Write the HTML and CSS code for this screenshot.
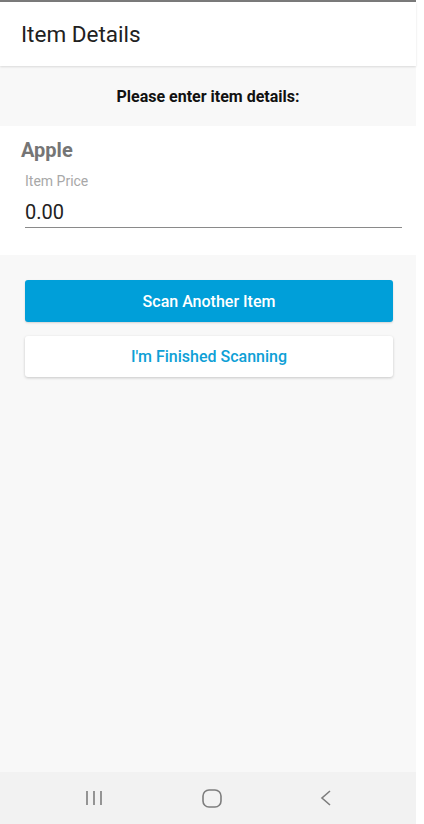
FILE: index.html
```html
<!DOCTYPE html>
<html lang="en">
<head>
    <meta charset="UTF-8">
    <title>Item Details</title>
    <link rel="stylesheet" href="styles.css">
</head>
<body>
    <div class="screen">
        <div class="status"></div>
        <div class="header">
            <h1>Item Details</h1>
        </div>
        <div class="intro">Please enter item details:</div>
        <div class="form">
            <div class="item-name">Apple</div>
            <label class="field-label" for="price">Item Price</label>
            <input class="field" id="price" type="text" value="0.00">
        </div>
        <div class="actions">
            <button class="btn btn-primary">Scan Another Item</button>
            <button class="btn btn-secondary">I'm Finished Scanning</button>
        </div>
        <div class="navbar">
            <svg class="nav-icon" width="18" height="16" viewBox="0 0 18 16">
                <path d="M2 1v14M9 1v14M16 1v14" stroke="#7d7d7d" stroke-width="1.6" fill="none"/>
            </svg>
            <svg class="nav-icon" width="20" height="19" viewBox="0 0 20 19">
                <rect x="1" y="1" width="18" height="17" rx="6" stroke="#7d7d7d" stroke-width="1.6" fill="none"/>
            </svg>
            <svg class="nav-icon" width="12" height="16" viewBox="0 0 12 16">
                <path d="M10 1L2 8l8 7" stroke="#7d7d7d" stroke-width="1.6" fill="none"/>
            </svg>
        </div>
    </div>
</body>
</html>
```

FILE: styles.css
```css
html { background: #fff; }
body { margin: 0; font-family: Roboto, "Liberation Sans", sans-serif; }
.screen { width: 416px; height: 824px; display: flex; flex-direction: column; background: #f8f8f8; }
.status { height: 2px; background: #7a7a7a; }
.header { height: 64px; background: #fff; display: flex; align-items: center; padding: 0 21px; box-shadow: 0 1px 2px rgba(0,0,0,0.12); position: relative; z-index: 1; }
.header h1 { margin: 0; font-size: 22.5px; font-weight: 400; color: #212121; }
.intro { height: 60px; display: flex; align-items: center; justify-content: center; font-size: 16px; font-weight: 700; color: #111; padding-top: 1px; box-sizing: border-box; }
.form { height: 129px; background: #fff; padding: 0 14px 0 21px; box-sizing: border-box; display: flex; flex-direction: column; }
.item-name { font-size: 20px; font-weight: 700; color: #757575; margin-top: 12px; }
.field-label { font-size: 14px; color: #a8a8a8; margin: 11px 0 0 4px; }
.field { margin: 11px 0 0 4px; border: none; border-bottom: 1px solid #8a8a8a; padding: 0 0 3px; height: 28px; box-sizing: border-box; line-height: 24px; font-family: inherit; font-size: 20px; color: #222; background: transparent; outline: none; }
.actions { flex: 1; padding: 25px 23px 0 25px; display: flex; flex-direction: column; gap: 14px; }
.btn { height: 42px; border-radius: 3px; font-family: inherit; font-size: 16px; font-weight: 500; border: none; }
.btn-primary { background: #009fd9; color: #fff; box-shadow: 0 1px 2px rgba(0,0,0,0.15); }
.btn-secondary { background: #fff; color: #0ea0d6; height: 41px; box-shadow: 0 1px 3px rgba(0,0,0,0.2); }
.navbar { height: 52px; background: #f2f2f2; display: flex; align-items: center; justify-content: space-between; padding: 0 84px 0 85px; }
.nav-icon { display: block; }
```
